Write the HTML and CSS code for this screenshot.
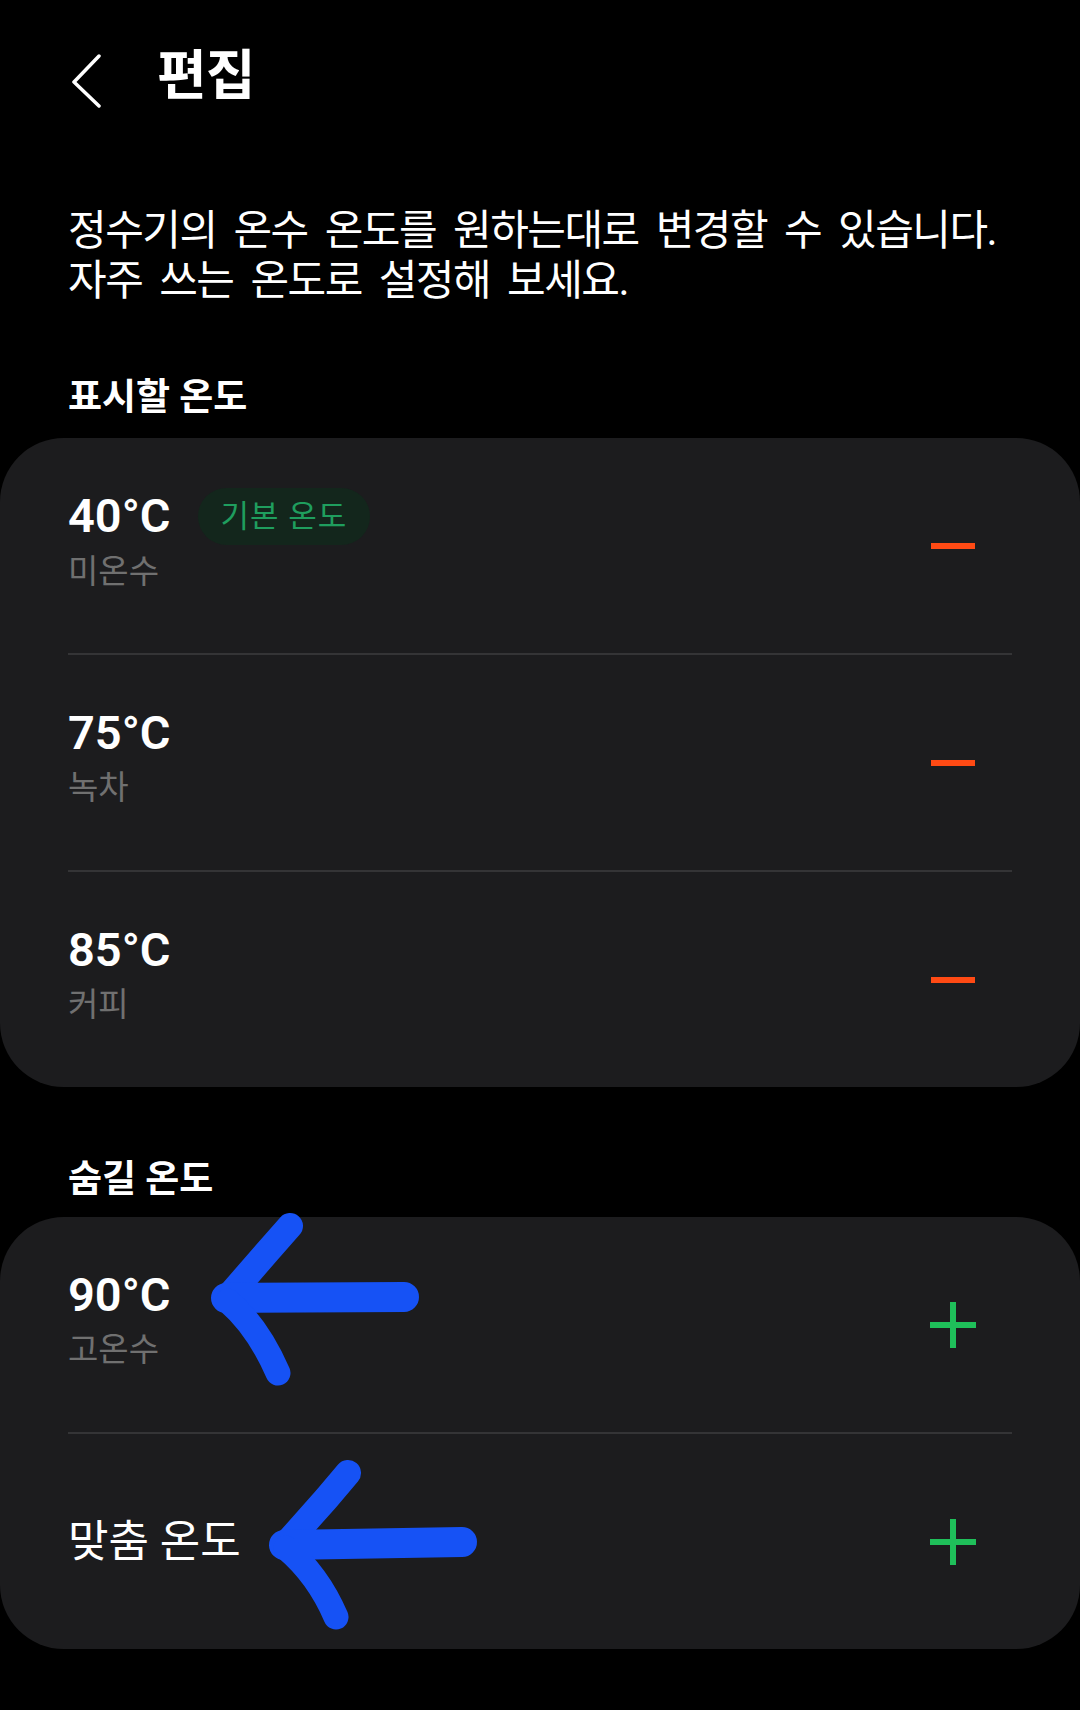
FILE: index.html
```html
<!DOCTYPE html>
<html lang="ko">
<head>
    <meta charset="UTF-8">
    <meta name="viewport" content="width=device-width, initial-scale=1.0">
    <title>편집</title>
    <link rel="stylesheet" href="styles.css">
</head>
<body>
    <header class="app-bar">
        <button class="back-btn" aria-label="뒤로">
            <svg width="34" height="54" viewBox="0 0 34 54">
                <polyline points="29,2 4,28 29,52" fill="none" stroke="#fff" stroke-width="3.5" stroke-linecap="round" stroke-linejoin="round"/>
            </svg>
        </button>
        <h1 class="title">편집</h1>
    </header>

    <p class="intro">정수기의 온수 온도를 원하는대로 변경할 수 있습니다.<br>자주 쓰는 온도로 설정해 보세요.</p>

    <h2 class="section-title">표시할 온도</h2>
    <div class="card">
        <div class="row">
            <div class="row-text">
                <div class="row-top">
                    <span class="temp">40°C</span>
                    <span class="badge">기본 온도</span>
                </div>
                <div class="sub">미온수</div>
            </div>
            <span class="icon"><span class="minus"></span></span>
        </div>
        <div class="divider"></div>
        <div class="row">
            <div class="row-text">
                <div class="row-top"><span class="temp">75°C</span></div>
                <div class="sub">녹차</div>
            </div>
            <span class="icon"><span class="minus"></span></span>
        </div>
        <div class="divider"></div>
        <div class="row">
            <div class="row-text">
                <div class="row-top"><span class="temp">85°C</span></div>
                <div class="sub">커피</div>
            </div>
            <span class="icon"><span class="minus"></span></span>
        </div>
    </div>

    <h2 class="section-title hidden-title">숨길 온도</h2>
    <div class="card">
        <div class="row">
            <div class="row-text">
                <div class="row-top"><span class="temp">90°C</span></div>
                <div class="sub">고온수</div>
            </div>
            <span class="icon">
                <svg width="48" height="48" viewBox="0 0 48 48"><path d="M24 1v46M1 24h46" stroke="#1fbf5a" stroke-width="6"/></svg>
            </span>
        </div>
        <div class="divider"></div>
        <div class="row single">
            <div class="row-text">
                <div class="label">맞춤 온도</div>
            </div>
            <span class="icon">
                <svg width="48" height="48" viewBox="0 0 48 48"><path d="M24 1v46M1 24h46" stroke="#1fbf5a" stroke-width="6"/></svg>
            </span>
        </div>

        <!-- hand drawn arrows over the screenshot -->
        <svg class="marks" width="1080" height="432" viewBox="0 0 1080 432">
            <g fill="none" stroke="#1652f5" stroke-linecap="round" stroke-linejoin="round">
                <path d="M228 80 L268 34 L290 9" stroke-width="26"/>
                <path d="M226 81 L404 80" stroke-width="30"/>
                <path d="M228 84 Q258 110 278 156" stroke-width="25"/>
                <path d="M286 327 L326 282 L348 256" stroke-width="26"/>
                <path d="M284 328 L462 325" stroke-width="30"/>
                <path d="M286 331 Q318 358 336 400" stroke-width="25"/>
            </g>
        </svg>
    </div>
</body>
</html>
```

FILE: styles.css
```css
body {
    margin: 0;
    background: #000;
    color: #fff;
    font-family: Roboto, "Noto Sans CJK KR", sans-serif;
    width: 1080px;
}

.app-bar {
    display: flex;
    align-items: flex-start;
    height: 62px;
    padding: 46px 0 0 70px;
}

.back-btn {
    background: none;
    border: none;
    padding: 0;
    margin-top: 8px;
    width: 34px;
    height: 54px;
    cursor: pointer;
}

.title {
    margin: 0 0 0 53px;
    font-size: 54px;
    line-height: 62px;
    font-weight: 700;
    letter-spacing: -1px;
}

.intro {
    margin: 98px 0 70px;
    padding-left: 68px;
    font-size: 42px;
    line-height: 50px;
    letter-spacing: -1.5px;
    word-spacing: 8px;
    white-space: nowrap;
}

.section-title {
    margin: 0 0 18px;
    padding-left: 68px;
    font-size: 37px;
    line-height: 44px;
    font-weight: 700;
    letter-spacing: 0;
}

.hidden-title {
    margin-top: 71px;
    margin-bottom: 15px;
}

.card {
    position: relative;
    background: #1c1c1e;
    border-radius: 64px;
}

.row {
    display: flex;
    align-items: center;
    justify-content: space-between;
    height: 215px;
    padding: 0 103px 0 68px;
    box-sizing: border-box;
}

.row-text {
    margin-bottom: 11px;
}

.row.single .row-text {
    margin-bottom: 0;
}

.row-top {
    display: flex;
    align-items: center;
    gap: 27px;
}

.temp {
    font-size: 47px;
    line-height: 56px;
    font-weight: 600;
}

.badge {
    height: 57px;
    padding: 0 23px;
    border-radius: 29px;
    background: #13261c;
    color: #1f9e5e;
    font-size: 31px;
    line-height: 57px;
    letter-spacing: 1px;
}

.sub {
    margin-top: 6px;
    font-size: 33px;
    line-height: 42px;
    color: #707070;
}

.label {
    font-size: 44px;
    line-height: 52px;
}

.icon {
    width: 48px;
    height: 48px;
    display: flex;
    align-items: center;
    justify-content: center;
}

.minus {
    width: 44px;
    height: 6px;
    background: #ff4a14;
}

.divider {
    height: 2px;
    margin: 0 68px;
    background: #343436;
}

.marks {
    position: absolute;
    top: 0;
    left: 0;
    overflow: visible;
    pointer-events: none;
}
```
